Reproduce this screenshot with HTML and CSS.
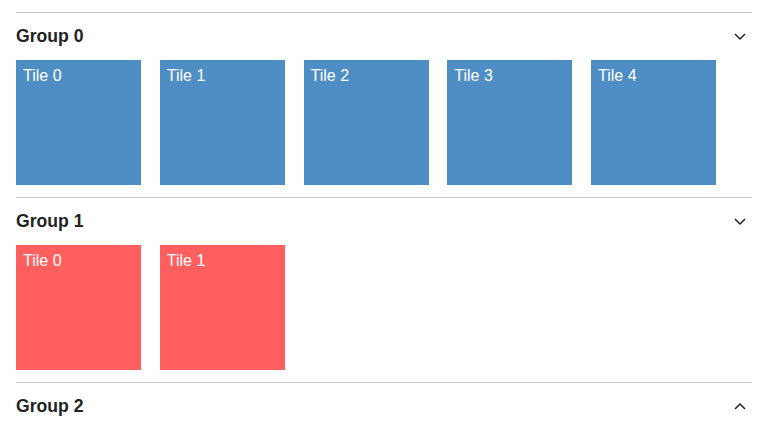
FILE: index.html
```html
<!DOCTYPE html>
<html>
<head>
<meta charset="utf-8">
<link rel="stylesheet" href="styles.css">
</head>
<body>
<div class="page">
  <section class="group">
    <div class="group-header">
      <span class="group-title">Group 0</span>
      <svg class="chevron" width="16" height="16" viewBox="0 0 16 16"><polyline points="3,5 8,10 13,5" fill="none" stroke="#222" stroke-width="1.5"/></svg>
    </div>
    <div class="tiles">
      <div class="tile blue">Tile 0</div>
      <div class="tile blue">Tile 1</div>
      <div class="tile blue">Tile 2</div>
      <div class="tile blue">Tile 3</div>
      <div class="tile blue">Tile 4</div>
    </div>
  </section>
  <section class="group">
    <div class="group-header">
      <span class="group-title">Group 1</span>
      <svg class="chevron" width="16" height="16" viewBox="0 0 16 16"><polyline points="3,5 8,10 13,5" fill="none" stroke="#222" stroke-width="1.5"/></svg>
    </div>
    <div class="tiles">
      <div class="tile red">Tile 0</div>
      <div class="tile red">Tile 1</div>
    </div>
  </section>
  <section class="group">
    <div class="group-header">
      <span class="group-title">Group 2</span>
      <svg class="chevron" width="16" height="16" viewBox="0 0 16 16"><polyline points="3,10 8,5 13,10" fill="none" stroke="#222" stroke-width="1.5"/></svg>
    </div>
  </section>
</div>
</body>
</html>
```
FILE: styles.css
```css
html, body {
  margin: 0;
  padding: 0;
  background: #fff;
}
body {
  font-family: "Liberation Sans", Arial, sans-serif;
  color: #222;
}
.page {
  padding: 12px 26px 0 16px;
}
.group {
  border-top: 1px solid #cccccc;
}
.group-header {
  height: 47px;
  display: flex;
  align-items: center;
  justify-content: space-between;
}
.group-title {
  font-size: 17.6px;
  font-weight: bold;
  color: #222;
}
.chevron {
  margin-right: 4px;
  display: block;
}
.tiles {
  display: flex;
  gap: 18.75px;
  padding-bottom: 12px;
}
.tile {
  width: 125px;
  height: 125px;
  box-sizing: border-box;
  padding: 7px 7px;
  color: #fff;
  font-size: 16px;
}
.blue {
  background: #4f8ec4;
}
.red {
  background: #ff5f5f;
}
```
